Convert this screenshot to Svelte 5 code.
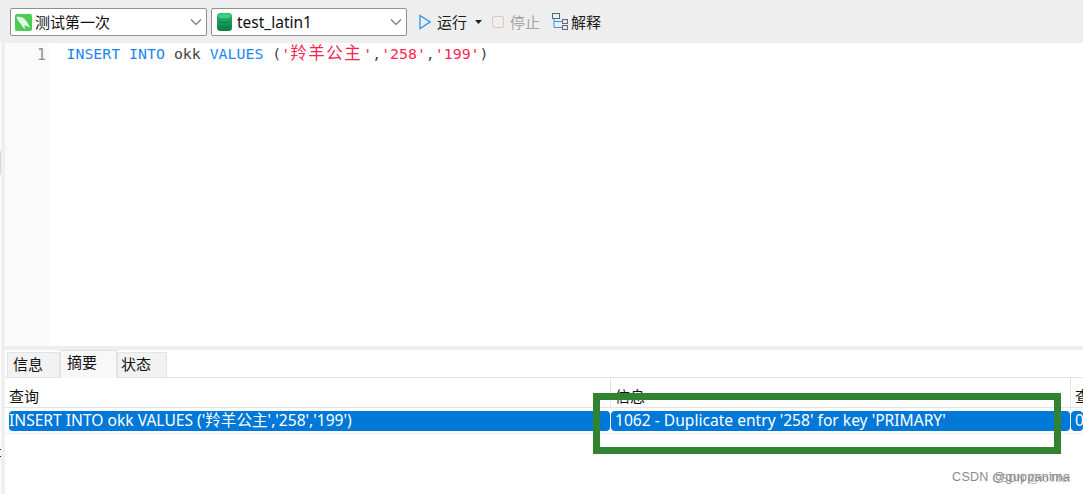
<script>
  const cjk = '羚羊公主';
</script>

<div class="page">
  <header class="toolbar">
    <div class="select conn">
      <svg class="ico" width="17" height="17" viewBox="0 0 17 17"><rect width="17" height="17" rx="2" fill="#4ccb55"/><path d="M1.500 3c3.500-1 7 0 9 3 1.500 2 3 4 4.500 8-2-1.500-4-2.500-5.500-2.500 0 1.500.5 2.500 1 3.500-2.500-1-3.500-2.500-4.500-5C4 8.500 2.500 6 1.500 3z" fill="#e6f7e6"/></svg>
      <span>测试第一次</span>
      <svg class="chev" width="12" height="8" viewBox="0 0 12 8"><path d="M1 1.500l5 5 5-5" fill="none" stroke="#777" stroke-width="1.200"/></svg>
    </div>
    <div class="select db">
      <svg class="ico" width="15" height="18" viewBox="0 0 15 18">
        <defs><linearGradient id="dbg" x1="0" y1="0" x2="0" y2="1"><stop offset="0" stop-color="#2fb56e"/><stop offset="1" stop-color="#0a7f43"/></linearGradient></defs>
        <rect y="0" width="15" height="18" rx="3.500" fill="url(#dbg)"/>
        <ellipse cx="7.500" cy="3" rx="6.500" ry="2.500" fill="#3ed083"/>
        <path d="M.5 8c3 2 11 2 14 0M.5 12.500c3 2 11 2 14 0" stroke="#0a6f3a" stroke-opacity=".5" fill="none"/>
      </svg>
      <span class="dbname">test_latin1</span>
      <svg class="chev" width="12" height="8" viewBox="0 0 12 8"><path d="M1 1.500l5 5 5-5" fill="none" stroke="#777" stroke-width="1.200"/></svg>
    </div>
    <div class="btn run">
      <svg width="12" height="16" viewBox="0 0 12 16"><path d="M1 1.500v13l10-6.500z" fill="none" stroke="#2f95ea" stroke-width="1.300"/></svg>
      <span>运行</span>
      <svg class="caret" width="7" height="4" viewBox="0 0 7 4"><path d="M0 0h7L3.500 4z" fill="#222"/></svg>
    </div>
    <div class="btn stop">
      <svg width="13" height="13" viewBox="0 0 13 13"><rect x=".5" y=".5" width="11" height="11" rx="1.500" fill="none" stroke="#e3c4bf"/></svg>
      <span>停止</span>
    </div>
    <div class="btn explain">
      <svg width="18" height="18" viewBox="0 0 18 18" fill="none"><rect x="1.500" y=".5" width="7" height="5" stroke="#4a6a80"/><rect x="11.500" y="6.500" width="5" height="4" stroke="#667"/><rect x="11.500" y="12.500" width="5" height="4" stroke="#667"/><path d="M3 5.500v9h8.500M3 8.500h8.500" stroke="#2f95ea"/></svg>
      <span>解释</span>
    </div>
  </header>

  <main class="body">
    <section class="editor">
      <div class="gutter">1</div>
      <div class="code"><span class="kw">INSERT INTO</span> <span class="id">okk</span> <span class="kw">VALUES</span> <span class="id">(</span><span class="str">'<span class="cjk">{cjk}</span>'</span><span class="id">,</span><span class="str">'258'</span><span class="id">,</span><span class="str">'199'</span><span class="id">)</span></div>
    </section>

    <section class="panel">
      <nav class="tabs">
        <div class="tab">信息</div>
        <div class="tab active">摘要</div>
        <div class="tab">状态</div>
      </nav>
      <div class="grid">
        <div class="row head">
          <div class="c c1">查询</div>
          <div class="c c2">信息</div>
          <div class="c c3">查</div>
        </div>
        <div class="row sel">
          <div class="c c1"><span>INSERT INTO okk VALUES ('{cjk}','258','199')</span></div>
          <div class="c c2"><span>1062 - Duplicate entry '258' for key 'PRIMARY'</span></div>
          <div class="c c3"><span>0</span></div>
        </div>
      </div>
    </section>
  </main>

  <div class="highlight"></div>
  <div class="grip"></div>
  <div class="tick t1"></div>
  <div class="tick t2"></div>
  <div class="mark">CSDN @guppanima</div>
  <div class="mark over">CSDN @ioTifei</div>
</div>

<style>
  :global(body) { margin: 0; background: #fff; }
  .page {
    position: relative;
    width: 1083px;
    height: 494px;
    overflow: hidden;
    background: #fff;
    font-family: "Noto Sans CJK SC", "Liberation Sans", sans-serif;
    color: #111;
  }
  .toolbar {
    box-sizing: border-box;
    height: 43px;
    padding: 8px 0 0 10px;
    display: flex;
    align-items: flex-start;
    background: #eeeeee;
    font-size: 15px;
    line-height: 20px;
  }
  .select {
    box-sizing: border-box;
    height: 28px;
    display: flex;
    align-items: center;
    background: #fff;
    border: 1px solid #8f8f8f;
    border-radius: 2px;
    position: relative;
  }
  .conn { width: 197px; margin-right: 4px; padding-left: 4px; }
  .conn span { margin-left: 3px; }
  .db { width: 196px; padding-left: 5px; }
  .db span { margin-left: 5px; font-family: "Noto Sans", sans-serif; font-size: 15.500px; }
  .chev { position: absolute; right: 4px; top: 9px; }
  .btn { height: 28px; display: flex; align-items: center; color: #1c1c1c; }
  .run { margin-left: 12px; }
  .run span { margin-left: 6px; }
  .caret { margin-left: 8px; }
  .stop { margin-left: 10px; color: #a5a5a5; }
  .stop span { margin-left: 5px; }
  .explain { margin-left: 11px; }
  .explain span { margin-left: 2px; }

  .body {
    height: 451px;
    margin-left: 1px;
    border-left: 4px solid #efefef;
  }
  .editor { height: 303px; display: flex; }
  .gutter {
    box-sizing: border-box;
    width: 44px;
    background: #fafafa;
    color: #8e8e8e;
    text-align: right;
    padding: 3px 3px 0 0;
    font: 15px/18px "DejaVu Sans Mono", monospace;
  }
  .code {
    padding: 1px 0 0 17.500px;
    font: 14.870px/18px "DejaVu Sans Mono", "Noto Sans CJK SC", monospace;
    white-space: pre;
  }
  .kw { color: #1a86f2; }
  .id { color: #444; }
  .str { color: #fb2350; }
  .cjk {
    font-family: "Noto Sans CJK SC", sans-serif;
    font-size: 16.500px;
    letter-spacing: 1.500px;
    padding-right: 1px;
    line-height: 1;
  }

  .panel {
    border-top: 4px solid #eeeeee;
    height: 144px;
  }
  .tabs {
    box-sizing: border-box;
    height: 28px;
    display: flex;
    align-items: flex-end;
    padding-left: 2px;
    border-bottom: 1px solid #e3e3e3;
    font-size: 15px;
  }
  .tab {
    box-sizing: border-box;
    height: 25px;
    width: 53px;
    padding: 0 0 0 5px;
    line-height: 21px;
    background: #f2f2f2;
    border: 1px solid #e3e3e3;
    border-bottom: 0;
  }
  .tab.active {
    height: 28px;
    width: 57px;
    padding: 0 0 0 6px;
    background: #f8f8f8;
    margin-bottom: -1px;
  }
  .tab:last-child { width: 50px; padding-left: 3px; }
  .grid { font-size: 15px; }
  .row { display: flex; }
  .c { box-sizing: border-box; white-space: nowrap; flex-shrink: 0; }
  .c1 { width: 605px; }
  .c2 { width: 460px; }
  .c3 { width: 13px; }
  .head { height: 29px; border-bottom: 1px solid #e3e3e3; }
  .head .c { padding: 8px 0 0 4px; line-height: 20px; }
  .head .c2, .head .c3 { border-left: 1px solid #e3e3e3; }
  .sel {
    margin-top: 3px;
    padding-bottom: 2px;
    border-bottom: 1px solid #ececec;
    height: 20px;
    font-family: "Noto Sans", "Noto Sans CJK SC", sans-serif;
    font-size: 15.600px;
    color: #fff;
  }
  .sel .c { background: #0078d7; border-radius: 4px; line-height: 19px; padding-left: 4px; }
  .sel .c1 { margin-left: 4px; width: 601px; padding-left: 0; }
  .sel .c2 { margin-left: 1px; width: 459px; }
  .sel .c3 { margin-left: 1px; width: 12px; }

  .highlight {
    position: absolute;
    left: 593px;
    top: 393px;
    width: 468px;
    height: 61px;
    box-sizing: border-box;
    border: 7px solid #318332;
  }
  .grip { position: absolute; left: 0; top: 151px; width: 1px; height: 24px; background: #d8d8d8; }
  .tick { position: absolute; left: 0; width: 1px; height: 1px; background: #222; }
  .t1 { top: 449px; }
  .t2 { top: 456px; }
  .mark {
    position: absolute;
    right: 13px;
    top: 470px;
    font: 12.500px/15px "Liberation Sans", sans-serif;
    color: #8a8a8a;
    letter-spacing: .3px;
    white-space: nowrap;
  }
  .over { top: 471px; font-size: 11.500px; letter-spacing: 0; opacity: .8; }
</style>
